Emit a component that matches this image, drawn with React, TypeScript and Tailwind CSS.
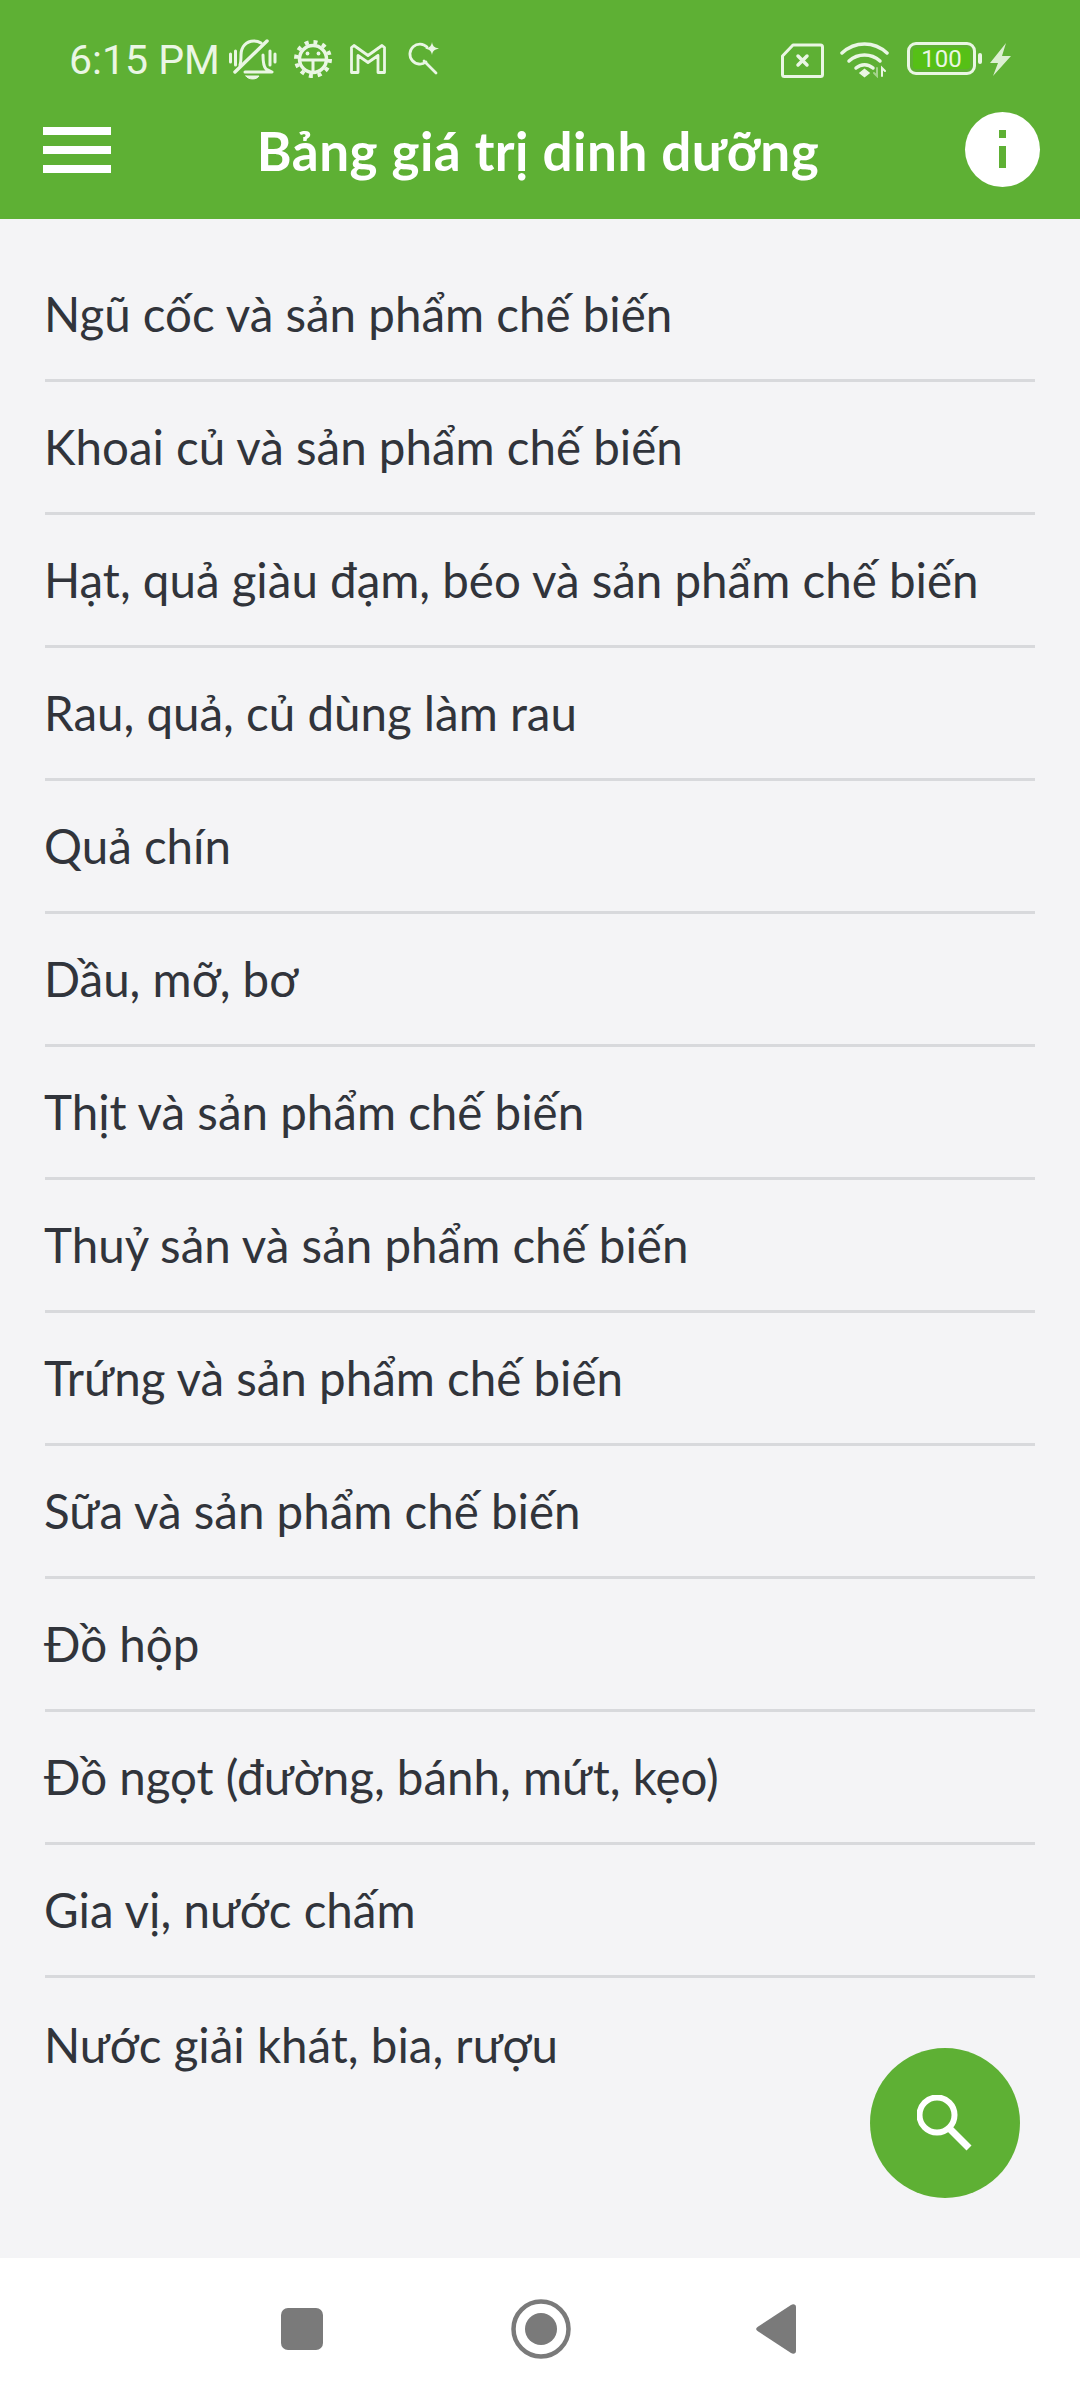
const items = [
  "Ngũ cốc và sản phẩm chế biến",
  "Khoai củ và sản phẩm chế biến",
  "Hạt, quả giàu đạm, béo và sản phẩm chế biến",
  "Rau, quả, củ dùng làm rau",
  "Quả chín",
  "Dầu, mỡ, bơ",
  "Thịt và sản phẩm chế biến",
  "Thuỷ sản và sản phẩm chế biến",
  "Trứng và sản phẩm chế biến",
  "Sữa và sản phẩm chế biến",
  "Đồ hộp",
  "Đồ ngọt (đường, bánh, mứt, kẹo)",
  "Gia vị, nước chấm",
  "Nước giải khát, bia, rượu",
];

const s = "#eaf6e4";

function StatusBar() {
  return (
    <div className="flex h-[88px] items-start pl-[69px] pt-[39px]">
      <span className="mt-[-3px] w-[160px] text-[41px] leading-[48px] text-[#eaf6e4] font-['Roboto',sans-serif]">6:15 PM</span>
      <svg className="h-[42px] w-[48px]" viewBox="0 0 48 42" fill="none" stroke={s} strokeWidth="3" strokeLinecap="round" strokeLinejoin="round">
        <path d="M1.500 15v8M6.500 12v14M41 12v14M46 15v8" />
        <path d="M11 26c1-3 1-6 1-10 0-8 5-14 13-14 3 0 5 .7 7 2" />
        <path d="M34 16c0 7 1 12 3 14l6 3H16" />
        <path d="M38 2 6 33" strokeWidth="3.500" />
        <path d="M17 37h13c-2 4-11 4-13 0Z" fill={s} strokeWidth="1" />
      </svg>
      <svg className="ml-[17px] mt-[1px] h-[38px] w-[38px]" viewBox="0 0 38 38" fill="none" stroke={s} strokeWidth="3">
        <circle cx="19" cy="19" r="13.500" strokeWidth="3.500" />
        <circle cx="19" cy="19" r="17" strokeWidth="4" strokeDasharray="4 4.900" />
        <path d="M6 20h26M19 20v12" />
        <circle cx="13.500" cy="13.500" r="1.900" fill={s} stroke="none" />
        <circle cx="24.500" cy="13.500" r="1.900" fill={s} stroke="none" />
      </svg>
      <svg className="ml-[18px] mt-[5px] h-[30px] w-[36px]" viewBox="0 0 36 30" fill="none" stroke={s} strokeWidth="2.800" strokeLinejoin="round">
        <path d="M1.500 3.500 4 1.500 18 11.500 32 1.500 34.500 3.500V28.500H28V11.500L18 18.500 8 11.500V28.500H1.500Z" />
      </svg>
      <svg className="ml-[21px] mt-[2px] h-[34px] w-[33px]" viewBox="0 0 33 34" fill="none" stroke={s} strokeWidth="2.800" strokeLinecap="round">
        <path d="M20 6a10 10 0 1 0-1 15" />
        <path d="m17 20 12 12" />
        <path d="M25 1c.7 4 2 5.500 7 6.500-5 1-6.300 2.500-7 6.500-.7-4-2-5.500-7-6.500 5-1 6.300-2.500 7-6.500Z" fill={s} stroke="none" />
      </svg>
      <svg className="ml-[341px] mt-[4px] h-[35px] w-[43px]" viewBox="0 0 43 35" fill="none" stroke={s} strokeWidth="3" strokeLinejoin="round">
        <path d="M12 2H39.500a2 2 0 0 1 2 2V31.500a2 2 0 0 1-2 2H3.500a2 2 0 0 1-2-2V13Z" />
        <path d="m17 13 9 9M26 13l-9 9" strokeWidth="3.500" strokeLinecap="round" />
      </svg>
      <svg className="ml-[16px] mt-[1px] h-[38px] w-[50px]" viewBox="0 0 50 38" fill="none" stroke={s} strokeWidth="3.500" strokeLinecap="round">
        <path d="M2 13c13-12 32-12 45 0" />
        <path d="M9 21c9-8 22-8 31 0" />
        <path d="M16 28c5-4.500 12-4.500 17 0" />
        <path d="M20 33l4.500-3.500L29 33l-4.500 3.500Z" fill={s} strokeWidth="1.500" />
        <path d="M37 28v8l-3-3" strokeWidth="2" opacity="0.5" />
        <path d="M42 36v-8l3 3" strokeWidth="2" />
      </svg>
      <div className="ml-[17px] mt-[3px] flex h-[33px] w-[69px] items-center justify-center rounded-[9px] border-[3px] border-[#eaf6e4] bg-[#56c016] bg-clip-content p-[3px]">
        <span className="text-[24px] leading-none text-[#eaf6e4] font-['Roboto',sans-serif]">100</span>
      </div>
      <div className="ml-[2px] mt-[14px] h-[11px] w-[4px] rounded-full bg-[#eaf6e4]" />
      <svg className="ml-[8px] mt-[4px] h-[33px] w-[21px]" viewBox="0 0 21 33" fill={s} opacity="0.9">
        <path d="M16 0 0 20H8L3 33 21 13H12Z" />
      </svg>
    </div>
  );
}

function TitleBar() {
  return (
    <div className="flex h-[131px] items-start justify-between pl-[43px] pr-[40px]">
      <div className="mt-[39px] flex w-[68px] flex-col gap-[11px]">
        <div className="h-[8px] bg-white" />
        <div className="h-[8px] bg-white" />
        <div className="h-[8px] bg-white" />
      </div>
      <h1 className="mt-[31px] text-[53px] font-bold leading-[64px] tracking-[0.5px] text-white font-['Lato',sans-serif]">Bảng giá trị dinh dưỡng</h1>
      <div className="mt-[24px] flex h-[75px] w-[75px] flex-col items-center rounded-full bg-white pt-[18px]">
        <div className="h-[8px] w-[7px] bg-[#5eb034]" />
        <div className="mt-[8px] h-[22px] w-[7px] bg-[#5eb034]" />
      </div>
    </div>
  );
}

export default function App() {
  return (
    <div className="relative flex h-[2400px] w-[1080px] flex-col overflow-hidden bg-[#f4f4f6] font-['Lato',sans-serif]">
      <header className="bg-[#5eb034]">
        <StatusBar />
        <TitleBar />
      </header>
      <main className="flex-1 px-[45px] pt-[30px]">
        {items.map((t, i) => (
          <div key={t} className={`flex h-[133px] items-center text-[47.5px] text-[#31343b] ${i < items.length - 1 ? "border-b-[3px] border-[#d8d9dc]" : ""}`}>
            <span className="-ml-px">{t}</span>
          </div>
        ))}
      </main>
      <button className="absolute left-[870px] top-[2048px] flex h-[150px] w-[150px] items-center justify-center rounded-full bg-[#5eb034]">
        <svg className="h-[56px] w-[56px]" viewBox="0 0 56 56" fill="none" stroke="#fff" strokeWidth="6">
          <circle cx="20" cy="20" r="17.500" />
          <path d="m33 34 19 19" strokeWidth="7" />
        </svg>
      </button>
      <nav className="flex h-[142px] items-start bg-white pl-[281px]">
        <div className="mt-[50px] h-[42px] w-[42px] rounded-[7px] bg-[#7a7a7a]" />
        <svg className="ml-[188px] mt-[41px] h-[60px] w-[60px]" viewBox="0 0 60 60">
          <circle cx="30" cy="30" r="27.500" fill="none" stroke="#7a7a7a" strokeWidth="4.500" />
          <circle cx="30" cy="30" r="16" fill="#7a7a7a" />
        </svg>
        <svg className="ml-[185px] mt-[46px] h-[50px] w-[41px]" viewBox="0 0 41 50" fill="#7a7a7a">
          <path d="M1.500 23 35 1c2.500-1.400 5-.5 5 2v44c0 2.500-2.500 3.400-5 2L1.500 27c-1.800-1.300-1.800-2.700 0-4Z" />
        </svg>
      </nav>
    </div>
  );
}
